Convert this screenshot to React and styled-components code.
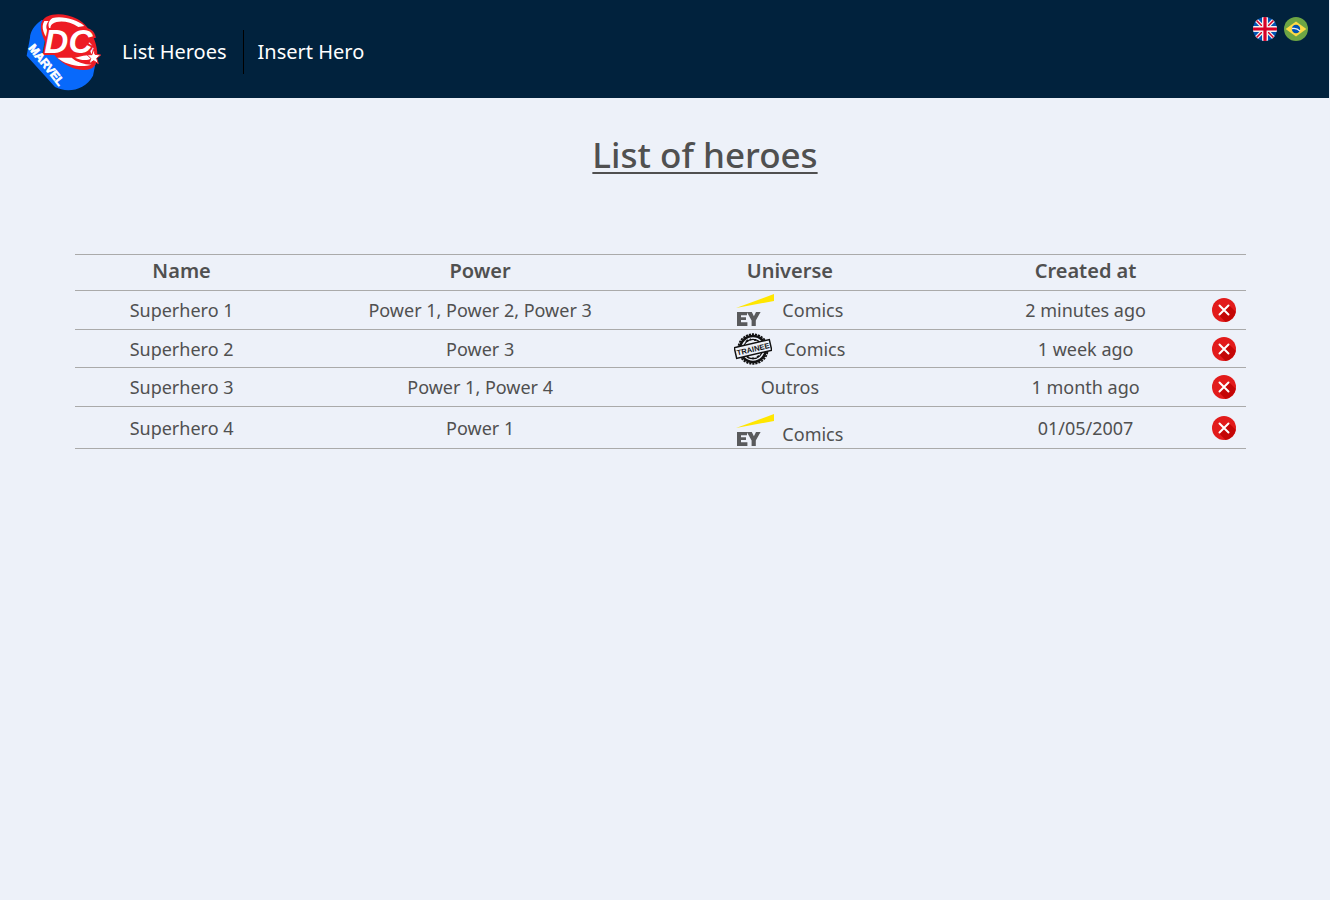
import React from "react";
import styled, { createGlobalStyle } from "styled-components";

const GlobalStyle = createGlobalStyle`
  * { box-sizing: border-box; }
  body {
    margin: 0;
    background: #edf1f9;
    color: #505050;
    font-family: "Noto Sans", "Open Sans", sans-serif;
  }
`;

const Header = styled.header`
  display: flex;
  align-items: flex-start;
  justify-content: space-between;
  height: 98px;
  margin-right: 1px;
  padding: 0 21px 0 15px;
  background: #01223d;
`;

const Brand = styled.div`
  display: flex;
  align-items: center;
`;

const HomeLink = styled.a`
  display: block;
  width: 100px;
  height: 95px;
  margin-top: 5px;
  svg { display: block; }
`;

const Nav = styled.nav`
  display: flex;
  align-items: center;
  margin-top: 3px;
  padding-left: 7px;
`;

const NavLink = styled.a`
  color: #fff;
  font-size: 20px;
  line-height: 44px;
  text-decoration: none;
  & + & {
    margin-left: 16px;
    padding-left: 14px;
    border-left: 1px solid #000;
  }
`;

const Languages = styled.div`
  display: flex;
  gap: 7px;
  padding-top: 17px;
`;

const IconButton = styled.button`
  display: block;
  width: 24px;
  height: 24px;
  padding: 0;
  border: 0;
  border-radius: 50%;
  background: none;
  cursor: pointer;
  svg { display: block; }
`;

const Title = styled.h1`
  margin: 0;
  padding: 30px 0 0 80px;
  font-size: 35px;
  font-weight: 500;
  line-height: 54px;
  text-align: center;
  text-decoration: underline;
  text-decoration-thickness: 2px;
  text-underline-offset: 4px;
  text-decoration-skip-ink: none;
`;

const TableArea = styled.main`
  padding: 72px 84px 40px 75px;
`;

const Table = styled.table`
  width: 100%;
  table-layout: fixed;
  border-collapse: collapse;
  border-top: 1px solid #aaa;
`;

const Col = styled.col`
  width: ${(p) => p.$width};
`;

const Row = styled.tr`
  height: ${(p) => p.$height}px;
  border-bottom: 1px solid #aaa;
`;

const HeadCell = styled.th`
  padding: 0 ${(p) => p.$inset || 0}px 4px 0;
  font-size: 20px;
  font-weight: 600;
  line-height: 28px;
`;

const Cell = styled.td`
  padding: 0 ${(p) => p.$inset || 0}px 0 0;
  font-size: 18px;
  line-height: 24px;
  text-align: center;
  vertical-align: ${(p) => (p.$low ? "bottom" : "middle")};
`;

const Universe = styled.div`
  display: flex;
  justify-content: center;
  align-items: ${(p) => (p.$low ? "flex-end" : "center")};
  gap: ${(p) => p.$gap || 8}px;
  padding-bottom: ${(p) => (p.$low ? 2 : 0)}px;
  svg { flex: none; }
`;

const DeleteButton = styled(IconButton)`
  margin: 0 auto;
`;

function BrandLogo() {
  return (
    <svg width="100" height="95" viewBox="0 0 300 285" aria-hidden="true">
      <path d="M80 45 C55 62 46 82 45 98 L35 152 L120 246 C154 264 210 258 234 212 L243 168 L160 60 Z" fill="#0869fb" />
      <path d="M78 57 C88 20 148 22 187 42 C228 64 252 120 246 164 C242 190 222 200 184 192 C128 180 72 104 78 57Z" fill="#ed1c24" />
      <path d="M88 48 C76 67 87 92 107 113 L105 84 C91 75 91 60 101 48Z" fill="#fff" />
      <path d="M113 39 C145 32 187 45 208 63 L190 66 C162 47 129 46 113 56 C105 61 105 72 109 78 C94 64 101 45 113 39Z" fill="#fff" />
      <path d="M127 158 C151 179 196 189 230 179 C207 178 184 171 170 158Z" fill="#fff" />
      <path d="M180 158 C198 167 216 167 230 161 L225 150 L205 152Z" fill="#fff" />
      <path d="M222 112 C231 118 237 130 238 142 L229 147 C226 135 222 130 217 129Z" fill="#fff" />
      <g fontFamily='"Liberation Sans", sans-serif' fontWeight="700">
        <text x="88" y="145" fontSize="100" fontStyle="italic" fill="#fff" stroke="#ed1c24" strokeWidth="12" paintOrder="stroke">DC</text>
        <text x="39" y="130" fontSize="35" fill="#fff" stroke="#fff" strokeWidth="2" transform="rotate(51 39 130)">MARVEL</text>
      </g>
      <path d="M235 133 L240 148 L257 150 L245 160 L250 176 L236 167 L222 177 L227 160 L216 149 L231 149Z" fill="#fff" stroke="#ed1c24" strokeWidth="3" />
    </svg>
  );
}

function UkFlag() {
  return (
    <svg width="24" height="24" viewBox="0 0 24 24" aria-hidden="true">
      <clipPath id="uk"><circle cx="12" cy="12" r="12" /></clipPath>
      <g clipPath="url(#uk)">
        <path fill="#0052b4" d="M0 0h24v24H0z" />
        <path d="M0 0l24 24M24 0L0 24" stroke="#f0f0f0" strokeWidth="4" />
        <path d="M0 0l24 24M24 0L0 24" stroke="#d80027" strokeWidth="1.5" />
        <path d="M12 0v24M0 12h24" stroke="#f0f0f0" strokeWidth="6" />
        <path d="M12 0v24M0 12h24" stroke="#d80027" strokeWidth="3.2" />
      </g>
    </svg>
  );
}

function BrazilFlag() {
  return (
    <svg width="24" height="24" viewBox="0 0 24 24" aria-hidden="true">
      <circle cx="12" cy="12" r="12" fill="#6da544" />
      <path d="M12 4.5L22.4 12 12 19.5 1.6 12z" fill="#ffda44" />
      <circle cx="12" cy="12" r="4.2" fill="#0052b4" />
      <path d="M8 11.5c3-.6 6 .3 8 2.6" stroke="#f0f0f0" strokeWidth="1.3" fill="none" />
    </svg>
  );
}

function EyLogo() {
  return (
    <svg width="38" height="32" viewBox="0 0 38 32" aria-hidden="true">
      <path d="M0 14L38 0v7z" fill="#ffe600" />
      <path d="M1 18h10v3.2H5v2h5v2.8H5v2.3h6.4V32H1z" fill="#595a5c" />
      <path d="M10.8 18h5l2.1 4.2L20 18h4.6l-4.8 8.4V32h-4.2v-5.6z" fill="#595a5c" />
    </svg>
  );
}

function TraineeLogo() {
  return (
    <svg width="38" height="32" viewBox="0 0 38 32" aria-hidden="true">
      <circle cx="19" cy="16" r="14.8" fill="none" stroke="#111" strokeWidth="1.8" strokeDasharray="2.1 1" />
      <circle cx="19" cy="16" r="13" fill="none" stroke="#111" strokeWidth="2.6" />
      <circle cx="19" cy="16" r="9.7" fill="none" stroke="#111" strokeWidth="1.2" />
      <path d="M12 8.8l2-1.8M16 6.8l1-1M20 6.8h2M24 8.2l2 1M13 23.5l2 1.5M18 25.3h2M23 24.4l2-1.6" stroke="#111" strokeWidth="1.8" />
      <g transform="rotate(-13 19 16)">
        <path d="M1 10.5h36v11H1z" fill="#edf1f9" stroke="#111" strokeWidth="1.5" />
        <text x="19" y="18.8" textAnchor="middle" fontSize="7.6" fontWeight="700" fontFamily='"Liberation Sans", sans-serif' fill="#111">TRAINEE</text>
      </g>
    </svg>
  );
}

function DeleteIcon() {
  return (
    <svg width="24" height="24" viewBox="0 0 24 24" aria-hidden="true">
      <circle cx="12" cy="12" r="12" fill="#e21b1b" />
      <path d="M17 7.2l6.8 6.6A12 12 0 0 1 13.5 23.9L7 17.3z" fill="#c40606" />
      <path d="M7.5 7.5l9 9M16.5 7.5l-9 9" stroke="#fff" strokeWidth="2" strokeLinecap="round" />
    </svg>
  );
}

const heroes = [
  { name: "Superhero 1", power: "Power 1, Power 2, Power 3", universe: "Comics", logo: <EyLogo />, created: "2 minutes ago", height: 39 },
  { name: "Superhero 2", power: "Power 3", universe: "Comics", logo: <TraineeLogo />, gap: 12, created: "1 week ago", height: 38 },
  { name: "Superhero 3", power: "Power 1, Power 4", universe: "Outros", created: "1 month ago", height: 39 },
  { name: "Superhero 4", power: "Power 1", universe: "Comics", logo: <EyLogo />, low: true, created: "01/05/2007", height: 42 },
];

export default function App() {
  return (
    <>
      <GlobalStyle />
      <Header>
        <Brand>
          <HomeLink href="#" aria-label="Home"><BrandLogo /></HomeLink>
          <Nav>
            <NavLink href="#list">List Heroes</NavLink>
            <NavLink href="#insert">Insert Hero</NavLink>
          </Nav>
        </Brand>
        <Languages>
          <IconButton type="button" aria-label="English"><UkFlag /></IconButton>
          <IconButton type="button" aria-label="Português"><BrazilFlag /></IconButton>
        </Languages>
      </Header>
      <Title>List of heroes</Title>
      <TableArea>
        <Table>
          <colgroup>
            <Col $width="23.5%" />
            <Col $width="22.2%" />
            <Col $width="30.7%" />
            <Col $width="19.8%" />
            <Col $width="3.8%" />
          </colgroup>
          <thead>
            <Row $height={36}>
              <HeadCell scope="col" $inset={62}>Name</HeadCell>
              <HeadCell scope="col">Power</HeadCell>
              <HeadCell scope="col">Universe</HeadCell>
              <HeadCell scope="col">Created at</HeadCell>
              <HeadCell as="td" />
            </Row>
          </thead>
          <tbody>
            {heroes.map((hero) => (
              <Row key={hero.name} $height={hero.height}>
                <Cell $inset={62}>{hero.name}</Cell>
                <Cell>{hero.power}</Cell>
                <Cell $low={hero.low}>
                  <Universe $gap={hero.gap} $low={hero.low}>{hero.logo}{hero.universe}</Universe>
                </Cell>
                <Cell>{hero.created}</Cell>
                <Cell>
                  <DeleteButton type="button" aria-label={`Delete ${hero.name}`}><DeleteIcon /></DeleteButton>
                </Cell>
              </Row>
            ))}
          </tbody>
        </Table>
      </TableArea>
    </>
  );
}
